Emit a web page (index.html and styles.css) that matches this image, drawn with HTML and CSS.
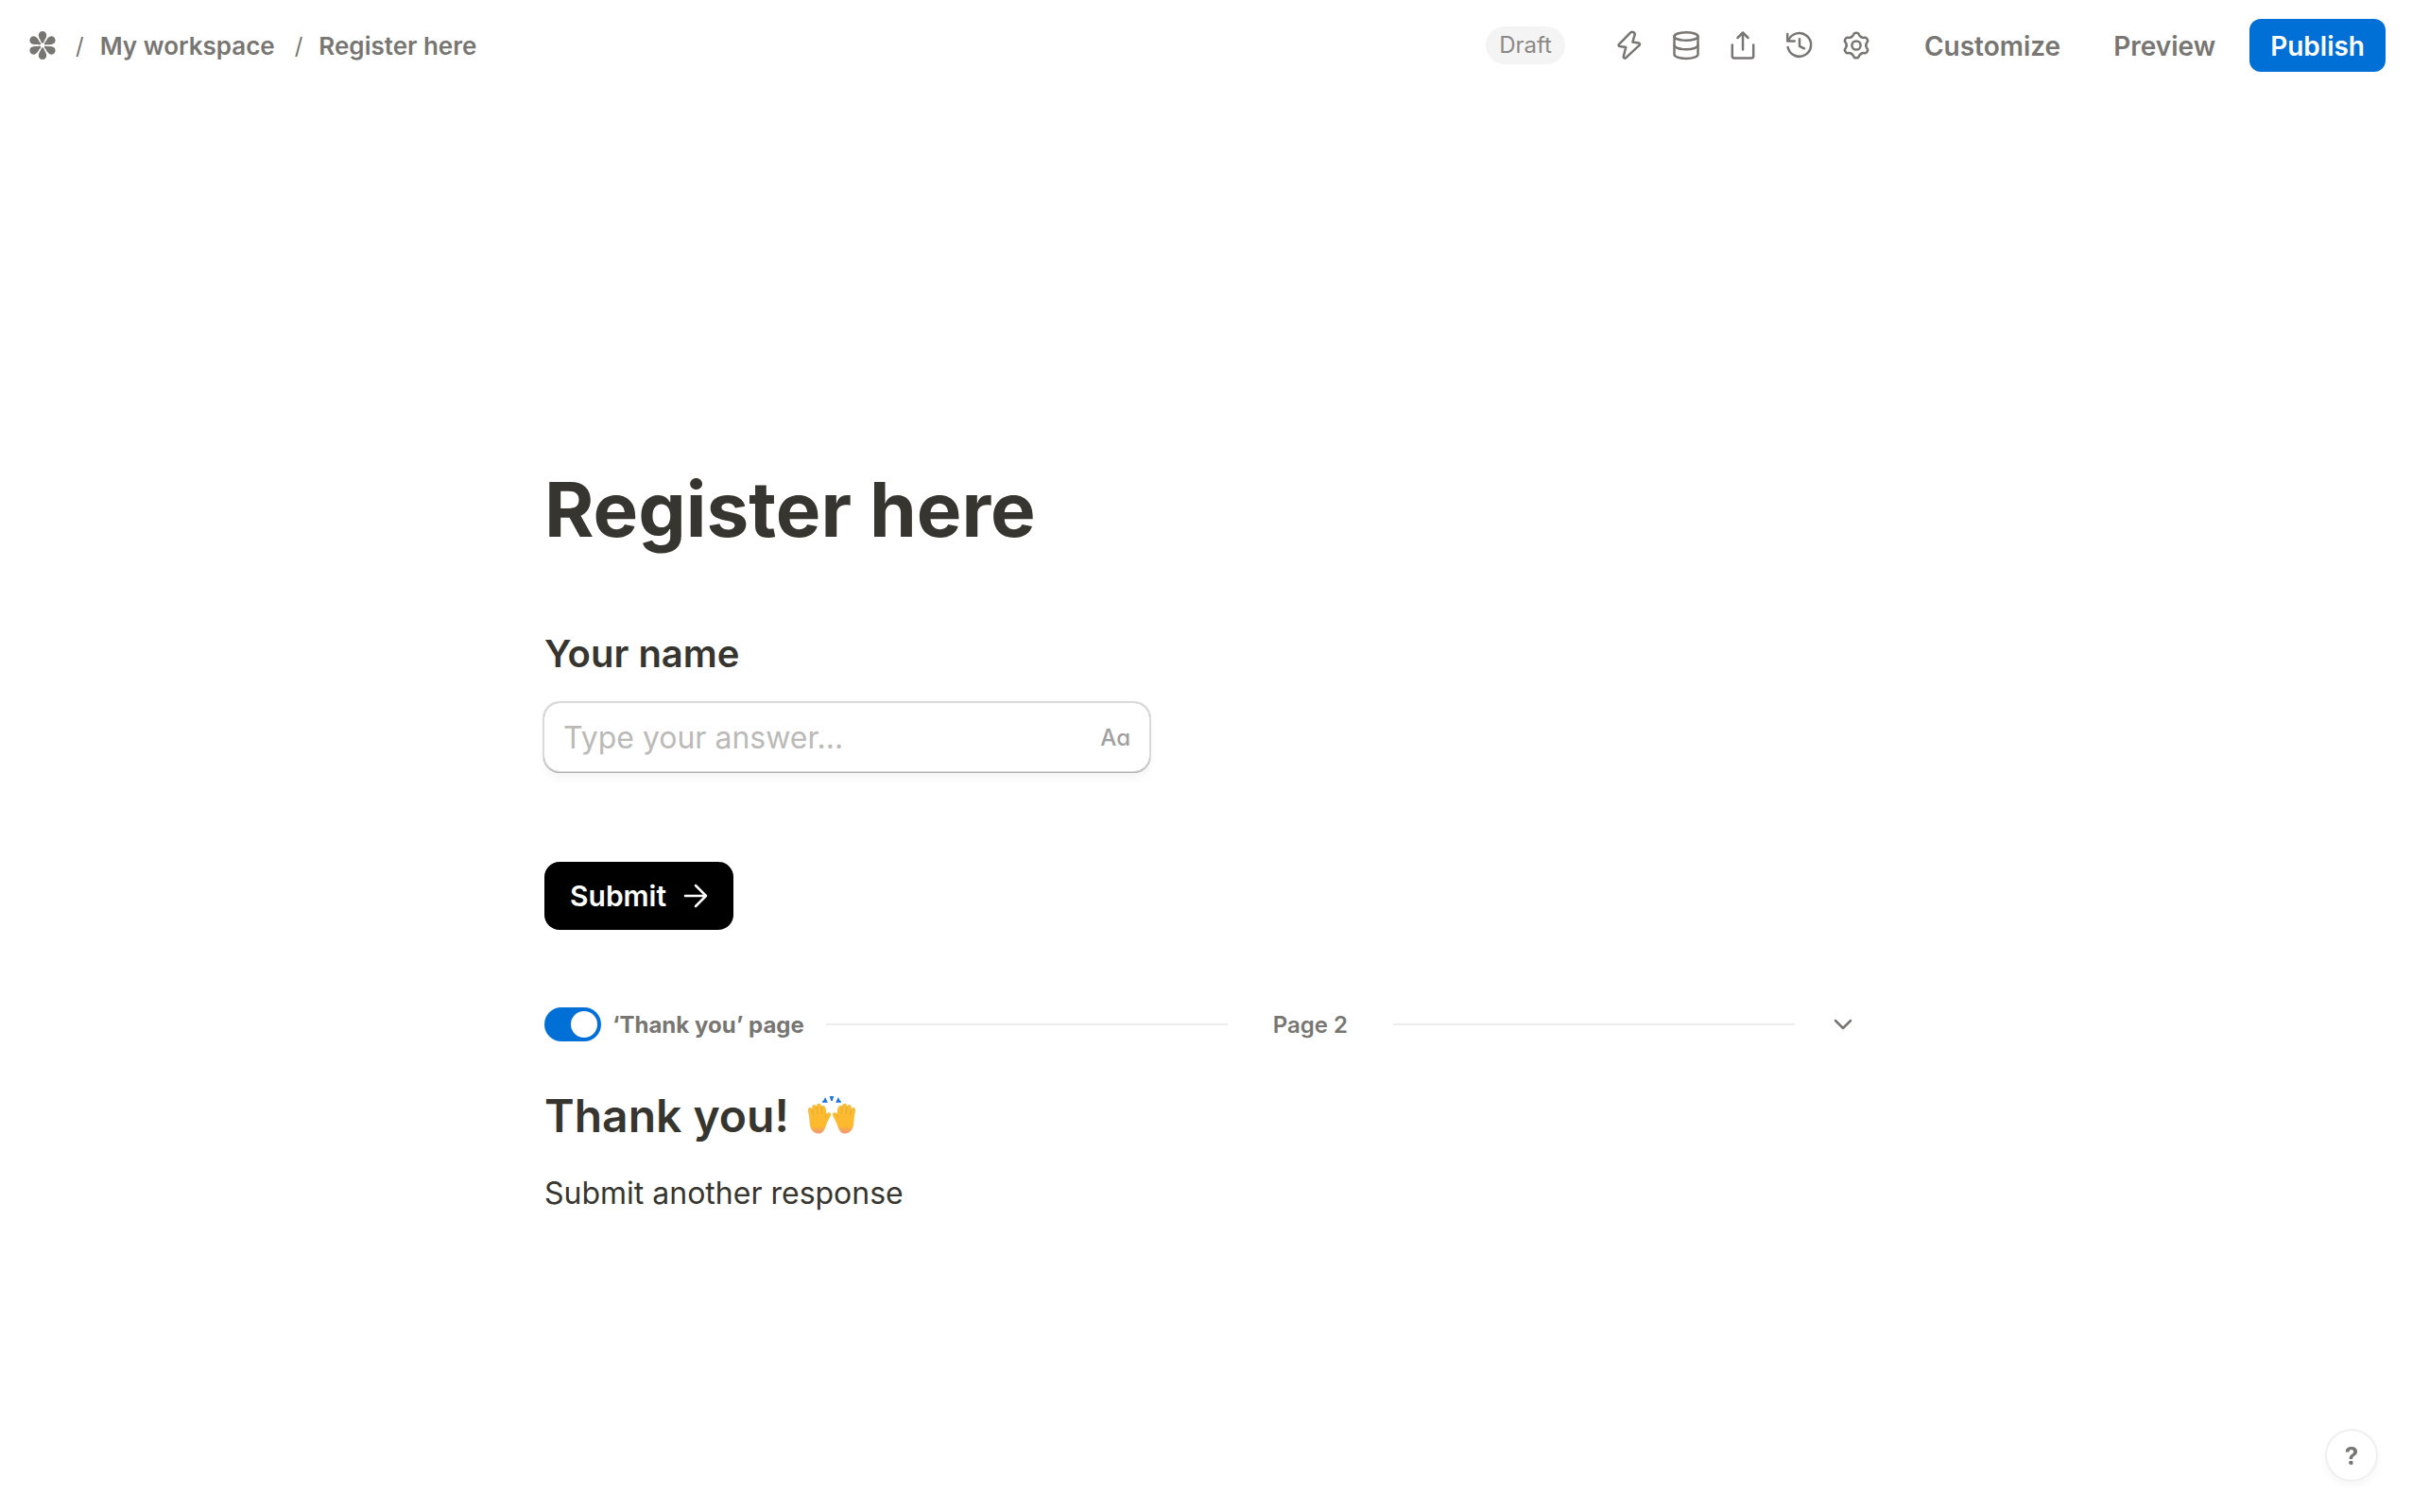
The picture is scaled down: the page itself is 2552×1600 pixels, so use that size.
FILE: index.html
```html
<!DOCTYPE html>
<html lang="en">
<head>
    <meta charset="UTF-8">
    <meta name="viewport" content="width=device-width, initial-scale=1.0">
    <title>Register here</title>
    <link rel="stylesheet" href="styles.css">
</head>
<body>
    <header class="topbar">
        <nav class="breadcrumb" aria-label="Breadcrumb">
            <a href="#" class="logo" aria-label="Home">
                <svg width="28" height="30" viewBox="0 0 28 30" fill="currentColor">
                    <path id="petal" d="M14 0c2.400 0 4.200 1.800 4.200 4.200 0 3.200-2.200 4.600-3.200 8.300h-2C12 8.800 9.800 7.400 9.800 4.200 9.800 1.800 11.600 0 14 0z"/>
                    <use href="#petal" transform="rotate(60 14 15)"/>
                    <use href="#petal" transform="rotate(120 14 15)"/>
                    <use href="#petal" transform="rotate(180 14 15)"/>
                    <use href="#petal" transform="rotate(240 14 15)"/>
                    <use href="#petal" transform="rotate(300 14 15)"/>
                </svg>
            </a>
            <span class="slash">/</span>
            <a href="#">My workspace</a>
            <span class="slash">/</span>
            <a href="#">Register here</a>
        </nav>

        <div class="actions">
            <span class="badge">Draft</span>
            <div class="tools">
                <button type="button" class="icon-button" aria-label="Integrations">
                    <svg width="32" height="32" viewBox="0 0 32 32">
                        <path d="M17.300 2.400 5 14.900c-.800.900-.300 2 .800 2.200l6.400 1-2.400 9.600c-.300 1.700 1.400 2.500 2.500 1.400L26.500 15.800c.900-1 .4-2.100-.8-2.300l-6.300-1 2.300-8.100c.400-2-2.900-3.600-4.400-2z"/>
                    </svg>
                </button>
                <button type="button" class="icon-button" aria-label="Data">
                    <svg width="32" height="32" viewBox="0 0 32 32">
                        <ellipse cx="16" cy="6.500" rx="12.500" ry="4.300"/>
                        <path d="M3.500 6.500v19.200c0 2.300 5.600 4.200 12.500 4.200s12.500-1.900 12.500-4.200V6.500"/>
                        <path d="M3.500 16c0 2.300 5.600 4.200 12.500 4.200S28.500 18.300 28.500 16"/>
                    </svg>
                </button>
                <button type="button" class="icon-button" aria-label="Share">
                    <svg width="32" height="32" viewBox="0 0 32 32">
                        <path d="M16 20.500V2.500M10.500 8 16 2.500 21.500 8"/>
                        <path d="M4.800 15.500v12c0 1.200.700 1.900 1.900 1.900h18.600c1.200 0 1.900-.7 1.900-1.900v-12"/>
                    </svg>
                </button>
                <button type="button" class="icon-button" aria-label="History">
                    <svg width="32" height="32" viewBox="0 0 32 32">
                        <path d="M3.200 4v7.500h7.500"/>
                        <path d="M4.200 10.800A12.400 12.400 0 1 1 3.600 18"/>
                        <path d="M16 9.200v7.600l5 2.500"/>
                    </svg>
                </button>
                <button type="button" class="icon-button" aria-label="Settings">
                    <svg width="32" height="32" viewBox="0 0 32 32">
                        <circle cx="16" cy="16" r="4.600"/>
                        <path id="tooth" d="M10.850 7.080C12.900 5.900 12.900 5.200 13.200 4.300 13.800 2.100 18.200 2.100 18.800 4.300 19.100 5.200 19.100 5.900 21.150 7.080"/>
                        <use href="#tooth" transform="rotate(60 16 16)"/>
                        <use href="#tooth" transform="rotate(120 16 16)"/>
                        <use href="#tooth" transform="rotate(180 16 16)"/>
                        <use href="#tooth" transform="rotate(240 16 16)"/>
                        <use href="#tooth" transform="rotate(300 16 16)"/>
                    </svg>
                </button>
            </div>
            <button type="button" class="text-button">Customize</button>
            <button type="button" class="text-button">Preview</button>
            <button type="button" class="publish-button">Publish</button>
        </div>
    </header>

    <main class="editor">
        <h1>Register here</h1>

        <form>
            <label class="question" for="name">Your name</label>
            <div class="answer">
                <input type="text" id="name" name="name" placeholder="Type your answer...">
                <span class="answer-type">Aa</span>
            </div>
            <button type="button" class="submit-button">
                Submit
                <svg width="26" height="26" viewBox="0 0 26 26">
                    <path d="M2 13h22M13 2l11 11-11 11"/>
                </svg>
            </button>
        </form>

        <div class="page-break">
            <label class="toggle">
                <input type="checkbox" name="thankYou" checked>
                ‘Thank you’ page
            </label>
            <div class="page-line">
                <span>Page 2</span>
            </div>
            <button type="button" class="icon-button" aria-label="Page options">
                <svg width="20" height="20" viewBox="0 0 20 20">
                    <path d="M2 6l8 8 8-8"/>
                </svg>
            </button>
        </div>

        <h2>
            Thank you!
            <svg width="50" height="42" viewBox="0 0 50 42" role="img" aria-label="Raising hands">
                <defs>
                    <linearGradient id="skin" x1="0" y1="0" x2="0" y2="1">
                        <stop offset="0" stop-color="#f7bd38"/>
                        <stop offset="0.750" stop-color="#feb92c"/>
                        <stop offset="1" stop-color="#f3957a"/>
                    </linearGradient>
                </defs>
                <g id="hand">
                    <path fill="url(#skin)" d="M.800 20C-.400 15.500-.300 12.300 1.500 12c1.200-.2 2.100.5 2.800 1.800-.4-2.800.2-4.700 2-4.800 1.200 0 2 .8 2.500 1.900.1-1.900.9-3.100 2.400-3.100 1.700 0 2.600 1.200 3 2.900.8-.7 1.900-1 2.900-.2 1.700 1.300 2.100 4.600 2.200 8.300 1.200-1.500 3.300-2.200 4.300-1 1.100 1.500-.1 3.800-1.500 6.200-1.800 3.200-2.700 5.400-3.600 8.200C17 36.800 14.900 39.500 11 39.500c-4.900 0-8.100-3.500-9-9C1.400 26.800 1.500 23 .800 20z"/>
                    <path fill="none" stroke="#eaa22a" stroke-width="0.800" stroke-linecap="round" d="M4.300 13.800l1.300 6.200M8.800 10.900l1.400 7.500M14.200 10.700l.6 7.500M19.300 19l-1.300 4"/>
                </g>
                <use href="#hand" transform="matrix(-1 0 0 1 50 0)"/>
                <g fill="#1f72dc">
                    <path d="M22.700 0h4.600L25.700 5h-1.400z"/>
                    <path d="M18 1l2.900 5.800h-5.700c-.4-1.400.2-2.200 1.300-2.300z"/>
                    <path d="M32 1l-2.900 5.800h5.700c.4-1.400-.2-2.200-1.300-2.300z"/>
                </g>
            </svg>
        </h2>
        <p>Submit another response</p>
    </main>

    <button type="button" class="help-button">?</button>
</body>
</html>
```
FILE: styles.css
```css
* {
    box-sizing: border-box;
}
body {
    margin: 0;
    background-color: #fff;
    color: #37352f;
    font-family: Inter, "Liberation Sans", sans-serif;
    font-size: 32px;
}
button {
    padding: 0;
    border: none;
    background: none;
    color: inherit;
    font: inherit;
    cursor: pointer;
}
svg {
    display: block;
    flex-shrink: 0;
}
.topbar {
    display: flex;
    justify-content: space-between;
    align-items: center;
    height: 96px;
    padding: 0 28px 0 31px;
    color: #777672;
}
.breadcrumb {
    display: flex;
    align-items: center;
    gap: 17px;
    font-size: 26px;
    font-weight: 600;
}
.breadcrumb a {
    color: inherit;
    text-decoration: none;
}
.slash {
    margin-left: 4px;
    font-size: 24px;
    font-weight: 400;
}
.actions {
    display: flex;
    align-items: center;
    font-size: 28px;
    font-weight: 600;
}
.badge {
    padding: 0 14px;
    border-radius: 20px;
    background-color: #f4f4f4;
    color: #8a8985;
    font-size: 24px;
    font-weight: 400;
    line-height: 40px;
}
.tools {
    display: flex;
    gap: 28px;
    margin: 0 28px 0 52px;
}
.icon-button svg,
.submit-button svg {
    fill: none;
    stroke: currentColor;
    stroke-width: 2.5;
    stroke-linecap: round;
    stroke-linejoin: round;
}
.text-button {
    padding: 3px 28px 0;
    line-height: 53px;
}
.publish-button {
    margin-left: 8px;
    padding: 3px 22px 0;
    border-radius: 12px;
    background-color: #0070d7;
    color: #fff;
    line-height: 53px;
}
.editor {
    width: 100%;
    max-width: 1400px;
    margin: 0 auto;
    padding: 395px 0 80px;
}
h1 {
    margin: 0 0 81px;
    font-size: 80px;
    font-weight: 700;
    line-height: 96px;
}
.question {
    display: block;
    margin-bottom: 28px;
    font-size: 40px;
    font-weight: 600;
    line-height: 48px;
}
.answer {
    display: flex;
    align-items: center;
    max-width: 640px;
    height: 72px;
    padding: 0 20px;
    border-radius: 16px;
    box-shadow: 0 0 0 1px #dadada, 0 1px 0 1px #b0b0b0, 0 0 0 2px #dadada, 0 8px 8px rgba(0, 0, 0, 0.04);
}
.answer input {
    flex: 1;
    min-width: 0;
    padding: 0;
    border: none;
    outline: none;
    background: none;
    color: inherit;
    font: inherit;
}
.answer input::placeholder {
    color: #bbbab8;
}
.answer-type {
    color: #a0a0a0;
    font-size: 24px;
    font-weight: 500;
    font-feature-settings: "cv11";
}
.submit-button {
    display: flex;
    align-items: center;
    gap: 18px;
    height: 72px;
    margin-top: 96px;
    padding: 0 27px;
    border-radius: 16px;
    background-color: #000;
    color: #fff;
    font-size: 30px;
    font-weight: 600;
}
.page-break {
    display: flex;
    align-items: center;
    height: 40px;
    margin: 80px 0 48px;
    color: #777672;
    font-size: 24px;
    font-weight: 600;
}
.toggle {
    display: flex;
    align-items: center;
    gap: 12px;
    font-weight: 700;
}
.toggle input {
    width: 60px;
    height: 36px;
    margin: 0;
    padding: 4px;
    border-radius: 18px;
    background-color: #0070d7;
    appearance: none;
}
.toggle input::before {
    content: "";
    display: block;
    width: 28px;
    height: 28px;
    border-radius: 50%;
    background-color: #fff;
}
.toggle input:checked::before {
    margin-left: auto;
}
.page-line {
    display: flex;
    flex: 1;
    align-items: center;
    gap: 48px;
    margin: 0 41px 0 23px;
}
.page-line::before,
.page-line::after {
    content: "";
    flex: 1;
    height: 2px;
    background-color: #ededec;
}
.page-break .icon-button {
    margin-right: 16px;
}
h2 {
    display: flex;
    align-items: center;
    gap: 20px;
    margin: 0 0 29px;
    font-size: 48px;
    font-weight: 600;
    line-height: 58px;
}
p {
    margin: 0;
    line-height: 48px;
}
.help-button {
    position: fixed;
    right: 36px;
    bottom: 32px;
    width: 56px;
    height: 56px;
    border-radius: 50%;
    background-color: #fff;
    color: #777672;
    font-size: 26px;
    font-weight: 700;
    box-shadow: 0 0 0 2px #efefef inset, 0 4px 8px rgba(0, 0, 0, 0.04);
}
```
